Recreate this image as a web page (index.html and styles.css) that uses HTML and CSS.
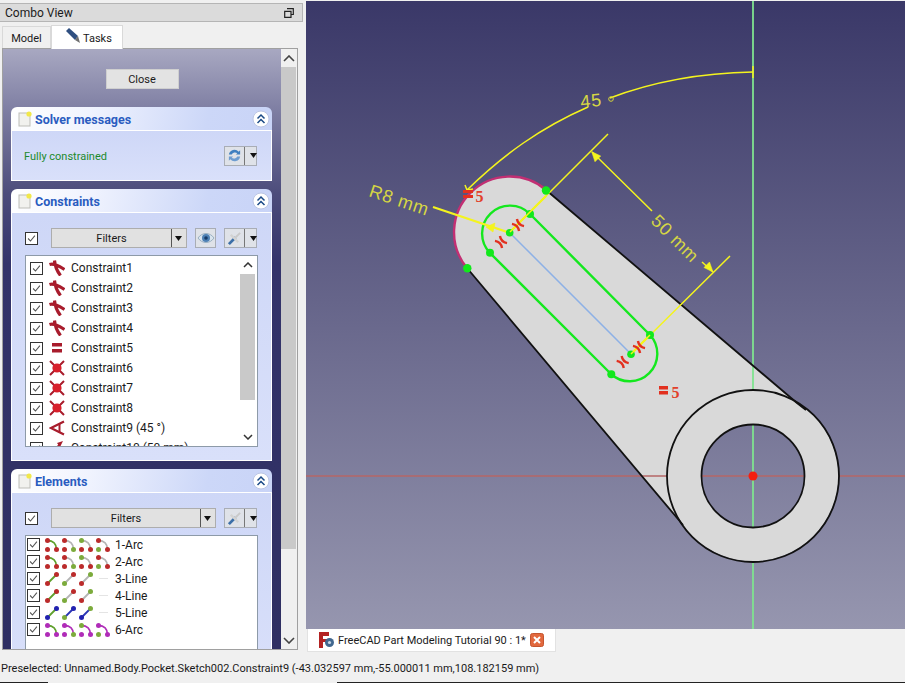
FILE: index.html
```html
<!DOCTYPE html>
<html lang="en">
<head>
<meta charset="utf-8">
<title>FreeCAD Combo View</title>
<link rel="stylesheet" href="styles.css">
</head>
<body>
<svg class="defs" width="0" height="0" aria-hidden="true">
  <symbol id="check" viewBox="0 0 13 13"><path d="M2.500 6.500 5.300 9.500 10.500 3.200" fill="none" stroke="#555" stroke-width="1.300"/></symbol>
  <symbol id="sheet" viewBox="0 0 14 16"><rect x="1" y="2" width="11" height="13" fill="#f1f1ee" stroke="#bdbdb8"/><circle cx="11" cy="3" r="2.600" fill="#f2e84a"/></symbol>
  <symbol id="collapse" viewBox="0 0 18 18"><circle cx="9" cy="9" r="8" fill="#fff" stroke="#bcc6e4"/><path d="M5.500 8.500 9 5l3.500 3.500M5.500 13 9 9.500l3.500 3.500" fill="none" stroke="#1b4a86" stroke-width="1.500"/></symbol>
  <symbol id="arrow" viewBox="0 0 9 5"><path d="M1 0h7L4.500 5z" fill="#111"/></symbol>
  <symbol id="refresh" viewBox="0 0 16 16"><path d="M2 7a6 6 0 0 1 10.500-3L14 2.500V7H9.500l1.500-1.500A4 4 0 0 0 5 7z" fill="#3f7fc0"/><path d="M14 9a6 6 0 0 1-10.500 3L2 13.500V9h4.500L5 10.500A4 4 0 0 0 11 9z" fill="#6d9cd0"/></symbol>
  <symbol id="eye" viewBox="0 0 18 14"><path d="M1 7c4-6 12-6 16 0-4 6-12 6-16 0z" fill="#d9e4ee" stroke="#9ab0c2"/><circle cx="9" cy="7" r="4" fill="#4d80b4"/><circle cx="9" cy="7" r="1.800" fill="#163a68"/></symbol>
  <symbol id="tools" viewBox="0 0 16 16"><path d="M2 14 9 7" stroke="#3c6fa8" stroke-width="3"/><path d="M8 8l6-6" stroke="#c9c9c9" stroke-width="2"/><path d="M4 4l8 8" stroke="#d3d3d3" stroke-width="2.500"/></symbol>
  <symbol id="tangent" viewBox="0 0 16 16"><path d="M0.500 4.500C5 3 10 6 15.500 9.500M5.500 .5C6 6 8 11 11.500 15.500" fill="none" stroke="#a81c2c" stroke-width="3.200"/></symbol>
  <symbol id="equal" viewBox="0 0 16 16"><path d="M3 3h10v3.500H3zM3 9h10v3.500H3z" fill="#a81c2c"/></symbol>
  <symbol id="coincident" viewBox="0 0 16 16"><path d="M1 1l14 14M15 1 1 15" stroke="#a81c2c" stroke-width="2"/><circle cx="8" cy="8" r="4.600" fill="#d8202c"/></symbol>
  <symbol id="angle" viewBox="0 0 16 16"><path d="M15 1.500 2 8l13 6.500" fill="none" stroke="#a81c2c" stroke-width="2.200"/><path d="M10.500 3.500v9" stroke="#a81c2c" stroke-width="2"/></symbol>
  <symbol id="length" viewBox="0 0 16 16"><path d="M14 1 8 3l3 4z" fill="#a81c2c"/><path d="M2 15 11 4" stroke="#a81c2c" stroke-width="2"/></symbol>
  <symbol id="arc-el" viewBox="0 0 14 14"><path class="edge" d="M2.500 2.500C8 2.500 11.500 6 11.500 11.500" fill="none" stroke-width="1.800"/><circle class="pa" cx="2.500" cy="2.500" r="2.500"/><circle class="pb" cx="2.500" cy="11.500" r="2.500"/><circle class="pc" cx="11.500" cy="11.500" r="2.500"/></symbol>
  <symbol id="line-el" viewBox="0 0 14 14"><path class="edge" d="M2.500 11.500 11.500 2.500" fill="none" stroke-width="1.800"/><circle class="pb" cx="2.500" cy="11.500" r="2.500"/><circle class="pa" cx="11.500" cy="2.500" r="2.500"/></symbol>
</svg>

<div class="main">
  <aside class="dock">
    <header class="dock-title">
      <span>Combo View</span>
      <svg class="dock-btn" viewBox="0 0 10 10"><path d="M3 .7h6.300V6.500H7.500M.7 3.300h6.300V9.300H.7zM.7 3.300h6.300" fill="none" stroke="#222" stroke-width="1.200"/></svg>
    </header>
    <nav class="tabs">
      <div class="tab">Model</div>
      <div class="tab active">
        <svg class="tab-icon" viewBox="0 0 16 16"><path d="M1 3 4 0l9 8-3 4z" fill="#2f4f80"/><path d="M10 12l3-4 2 7z" fill="#6f6f6f"/></svg>
        Tasks
      </div>
    </nav>
    <div class="pane">
      <div class="task-scroll">
        <button class="close-btn">Close</button>

        <section class="box">
          <div class="box-head">
            <svg class="box-icon"><use href="#sheet"/></svg>
            <h2>Solver messages</h2>
            <svg class="box-toggle"><use href="#collapse"/></svg>
          </div>
          <div class="box-body solver">
            <span class="ok">Fully constrained</span>
            <div class="tool split"><svg class="tool-icon"><use href="#refresh"/></svg><i></i><svg class="caret"><use href="#arrow"/></svg></div>
          </div>
        </section>

        <section class="box">
          <div class="box-head">
            <svg class="box-icon"><use href="#sheet"/></svg>
            <h2>Constraints</h2>
            <svg class="box-toggle"><use href="#collapse"/></svg>
          </div>
          <div class="box-body">
            <div class="filter-row">
              <span class="cb"><svg><use href="#check"/></svg></span>
              <div class="combo"><span>Filters</span><i></i><svg class="caret"><use href="#arrow"/></svg></div>
              <div class="tool eye-btn"><svg class="eye-icon"><use href="#eye"/></svg></div>
              <div class="tool split"><svg class="tool-icon"><use href="#tools"/></svg><i></i><svg class="caret"><use href="#arrow"/></svg></div>
            </div>
            <div class="list constraints">
              <ul>
                <li><span class="cb"><svg><use href="#check"/></svg></span><svg class="c-icon"><use href="#tangent"/></svg>Constraint1</li>
                <li><span class="cb"><svg><use href="#check"/></svg></span><svg class="c-icon"><use href="#tangent"/></svg>Constraint2</li>
                <li><span class="cb"><svg><use href="#check"/></svg></span><svg class="c-icon"><use href="#tangent"/></svg>Constraint3</li>
                <li><span class="cb"><svg><use href="#check"/></svg></span><svg class="c-icon"><use href="#tangent"/></svg>Constraint4</li>
                <li><span class="cb"><svg><use href="#check"/></svg></span><svg class="c-icon"><use href="#equal"/></svg>Constraint5</li>
                <li><span class="cb"><svg><use href="#check"/></svg></span><svg class="c-icon"><use href="#coincident"/></svg>Constraint6</li>
                <li><span class="cb"><svg><use href="#check"/></svg></span><svg class="c-icon"><use href="#coincident"/></svg>Constraint7</li>
                <li><span class="cb"><svg><use href="#check"/></svg></span><svg class="c-icon"><use href="#coincident"/></svg>Constraint8</li>
                <li><span class="cb"><svg><use href="#check"/></svg></span><svg class="c-icon"><use href="#angle"/></svg>Constraint9 (45 °)</li>
                <li><span class="cb"><svg><use href="#check"/></svg></span><svg class="c-icon"><use href="#length"/></svg>Constraint10 (50 mm)</li>
              </ul>
              <div class="mini-bar">
                <svg class="chev" viewBox="0 0 10 6"><path d="M1 5 5 1l4 4" fill="none" stroke="#333" stroke-width="1.500"/></svg>
                <div class="mini-thumb"></div>
                <svg class="chev" viewBox="0 0 10 6"><path d="M1 1l4 4 4-4" fill="none" stroke="#333" stroke-width="1.500"/></svg>
              </div>
            </div>
          </div>
        </section>

        <section class="box">
          <div class="box-head">
            <svg class="box-icon"><use href="#sheet"/></svg>
            <h2>Elements</h2>
            <svg class="box-toggle"><use href="#collapse"/></svg>
          </div>
          <div class="box-body">
            <div class="filter-row">
              <span class="cb"><svg><use href="#check"/></svg></span>
              <div class="combo wide"><span>Filters</span><i></i><svg class="caret"><use href="#arrow"/></svg></div>
              <div class="tool split"><svg class="tool-icon"><use href="#tools"/></svg><i></i><svg class="caret"><use href="#arrow"/></svg></div>
            </div>
            <ul class="list elements">
              <li><span class="cb"><svg><use href="#check"/></svg></span>
                <svg class="el e-g a-r b-r c-r"><use href="#arc-el"/></svg><svg class="el e-x a-r b-r c-g"><use href="#arc-el"/></svg><svg class="el e-x a-g b-r c-r"><use href="#arc-el"/></svg><svg class="el e-x a-r b-g c-r"><use href="#arc-el"/></svg><span class="el-name">1-Arc</span></li>
              <li><span class="cb"><svg><use href="#check"/></svg></span>
                <svg class="el e-g a-r b-r c-r"><use href="#arc-el"/></svg><svg class="el e-x a-r b-r c-g"><use href="#arc-el"/></svg><svg class="el e-x a-g b-r c-r"><use href="#arc-el"/></svg><svg class="el e-x a-r b-g c-r"><use href="#arc-el"/></svg><span class="el-name">2-Arc</span></li>
              <li><span class="cb"><svg><use href="#check"/></svg></span>
                <svg class="el e-g a-r b-r"><use href="#line-el"/></svg><svg class="el e-x a-r b-g"><use href="#line-el"/></svg><svg class="el e-x a-g b-r"><use href="#line-el"/></svg><b class="el-dash"></b><span class="el-name">3-Line</span></li>
              <li><span class="cb"><svg><use href="#check"/></svg></span>
                <svg class="el e-g a-r b-r"><use href="#line-el"/></svg><svg class="el e-x a-r b-g"><use href="#line-el"/></svg><svg class="el e-x a-g b-r"><use href="#line-el"/></svg><b class="el-dash"></b><span class="el-name">4-Line</span></li>
              <li><span class="cb"><svg><use href="#check"/></svg></span>
                <svg class="el e-g a-b b-b"><use href="#line-el"/></svg><svg class="el e-b a-b b-g"><use href="#line-el"/></svg><svg class="el e-b a-g b-b"><use href="#line-el"/></svg><b class="el-dash"></b><span class="el-name">5-Line</span></li>
              <li><span class="cb"><svg><use href="#check"/></svg></span>
                <svg class="el e-g a-m b-m c-m"><use href="#arc-el"/></svg><svg class="el e-m a-m b-m c-g"><use href="#arc-el"/></svg><svg class="el e-m a-g b-m c-m"><use href="#arc-el"/></svg><svg class="el e-m a-m b-g c-m"><use href="#arc-el"/></svg><span class="el-name">6-Arc</span></li>
            </ul>
          </div>
        </section>
      </div>
      <div class="pane-bar">
        <svg class="pane-chev" viewBox="0 0 12 7"><path d="M1 6l5-5 5 5" fill="none" stroke="#444" stroke-width="1.600"/></svg>
        <div class="pane-thumb"></div>
        <svg class="pane-chev" viewBox="0 0 12 7"><path d="M1 1l5 5 5-5" fill="none" stroke="#444" stroke-width="1.600"/></svg>
      </div>
    </div>
  </aside>

  <div class="view">
    <svg class="canvas" viewBox="306 1 599 628" width="599" height="628">
      <defs>
        <linearGradient id="sky" x1="0" y1="0" x2="0" y2="1">
          <stop offset="0" stop-color="#3a3868"/>
          <stop offset="1" stop-color="#9696af"/>
        </linearGradient>
      </defs>
      <rect x="306" y="1" width="599" height="628" fill="url(#sky)"/>
      <path class="solid" fill-rule="evenodd" d="M546 190 797 403 808.100 410.600A85.500 85.500 0 1 1 683.900 526.400L467 268A55.700 55.700 0 0 1 546 190ZM804.500 476a51.500 51.500 0 1 0-103 0a51.500 51.500 0 1 0 103 0Z"/>
      <path class="axis-g" d="M753 1V390M753 424.500V527.500M753 562V629"/>
      <path class="axis-r" d="M306 476H667M702 476H804M839 476H905"/>
      <circle class="wire" cx="753" cy="476" r="86"/>
      <circle class="wire" cx="753" cy="476" r="51.500"/>
      <path class="wire" d="M546 190 797 403 806 410M467 268 683 525"/>
      <path class="rim" d="M546 190A55.700 55.700 0 0 0 467 268"/>
      <path class="ref" d="M509.700 232.700 631 354"/>
      <path class="slot" d="M530 214 650 335A27.600 27.600 0 0 1 611 374L490 253A27.600 27.600 0 0 1 530 214Z"/>
      <g class="dim">
        <path d="M753 72C698 73 652 82 610 98M588 107C540 128 503 155 467 190"/>
        <path d="M753 66V78M465 185 467 190 473 189"/>
        <path d="M608 134 510 232M730 256 631 354"/>
        <path d="M592 152 652 211M702 262 713 272"/>
        <path class="thick" d="M433 207 510 233M510 232 546 196M631 354 650 335"/>
        <path class="head" d="M486 227 495 223 493 232ZM591.700 151.700 600.700 156 595 161.700ZM713 272 704 267.500 709.500 262Z"/>
        <circle class="deg" cx="611" cy="99" r="2.300"/>
      </g>
      <text class="dim-text" transform="translate(581 108) rotate(-6)">45</text>
      <text class="dim-text" transform="translate(368 196) rotate(18.700)">R8 mm</text>
      <text class="dim-text" transform="translate(650 222) rotate(45)">50 mm</text>
      <g class="pts">
        <circle cx="546" cy="190.500" r="4.200"/><circle cx="467.300" cy="268.300" r="4.200"/>
        <circle cx="530" cy="214" r="4"/><circle cx="490" cy="252.700" r="4"/>
        <circle cx="650" cy="335" r="4"/><circle cx="611.300" cy="374.300" r="4"/>
        <circle cx="509.700" cy="232.700" r="3.800"/><circle cx="631" cy="354.300" r="3.800"/>
      </g>
      <path class="dim thin" d="M510 232 546 196M631 354 650 335"/>
      <g class="tan">
        <path d="M-5-3.500Q0 0 5-3.500M-5 3.500Q0 0 5 3.500" transform="translate(518 225) rotate(45)"/>
        <path d="M-5-3.500Q0 0 5-3.500M-5 3.500Q0 0 5 3.500" transform="translate(501 242) rotate(45)"/>
        <path d="M-5-3.500Q0 0 5-3.500M-5 3.500Q0 0 5 3.500" transform="translate(639 347) rotate(45)"/>
        <path d="M-5-3.500Q0 0 5-3.500M-5 3.500Q0 0 5 3.500" transform="translate(622.700 362) rotate(45)"/>
      </g>
      <path class="eq" d="M463 190h10v3h-10zM463 195h10v3h-10zM659 386h9v3.500h-9zM659 391h9v3.500h-9z"/>
      <text class="five" x="475.500" y="201.500">5</text>
      <text class="five" x="671.500" y="397.500">5</text>
      <circle class="origin" cx="753" cy="476" r="4.500"/>
    </svg>
    <div class="doc-tabs">
      <div class="doc-tab">
        <svg class="doc-icon" viewBox="0 0 16 16"><path d="M0 0h10v4H4v3h5v3H4v6H0z" fill="#b32222"/><circle cx="10.500" cy="10.500" r="4.500" fill="#40678f"/><circle cx="10.500" cy="10.500" r="1.600" fill="#c8d6e4"/></svg>
        <span>FreeCAD Part Modeling Tutorial 90 : 1*</span>
        <svg class="doc-close" viewBox="0 0 14 14"><rect x=".5" y=".5" width="13" height="13" rx="2" fill="#e2683d" stroke="#c4552f"/><path d="M4 4l6 6M10 4l-6 6" stroke="#fff" stroke-width="2"/></svg>
      </div>
    </div>
  </div>
</div>
<footer class="status">Preselected: Unnamed.Body.Pocket.Sketch002.Constraint9 (-43.032597 mm,-55.000011 mm,108.182159 mm)</footer>
</body>
</html>
```

FILE: styles.css
```css
* { box-sizing: border-box; }
html, body { margin: 0; padding: 0; }
body {
  width: 905px;
  height: 683px;
  overflow: hidden;
  background: #f0f0f0;
  font-family: Roboto, "Noto Sans", sans-serif;
  font-size: 12px;
  color: #1a1a1a;
}
.defs { position: absolute; }
.main { display: flex; height: 650px; }

/* Dock */
.dock { width: 306px; padding-top: 3px; flex: none; display: flex; flex-direction: column; }
.dock-title {
  height: 19px;
  margin: 0 3px 0 0;
  padding: 1px 5px 0;
  display: flex; align-items: center; justify-content: space-between;
  background: #dbdbdb;
  border: 1px solid #b5b5b5;
  border-left: 0;
  font-size: 12px;
}
.dock-btn { width: 10px; height: 10px; margin-right: 3px; }
.tabs { display: flex; height: 26px; padding: 2px 0 0 2px; align-items: flex-end; font-size: 11px; }
.tab {
  height: 22px; width: 49px;
  border: 1px solid #d9d9d9; border-bottom: 0;
  background: #f0f0f0;
  text-align: center; line-height: 23px;
}
.tab.active {
  height: 24px; width: 72px;
  background: #fff;
  display: flex; align-items: center; padding: 1px 0 0 13px; gap: 2px;
  margin-bottom: -1px; position: relative; z-index: 1;
}
.tab-icon { width: 16px; height: 16px; margin-top: -4px; }
.pane {
  width: 296px; height: 602px; margin-left: 2px;
  display: flex;
  border: 1px solid #a0a0a0;
  background: #f0f0f0;
}
.task-scroll {
  width: 278px; height: 600px; overflow: hidden;
  padding: 20px 8px 0;
  background: linear-gradient(#a8a8c1 0, #7f7fa3 60px, #4c4c7b 145px, #33336a 215px, #2f2f62 100%);
  flex: none;
}
.close-btn {
  display: block;
  width: 73px; height: 20px; margin: 0 auto 18px; padding: 0;
  background: #e3e3e3; border: 1px solid #cfcfcf;
  font: inherit; font-size: 11px; color: #1a1a1a;
}
.box { margin-bottom: 8px; width: 261px; }
.box-head {
  height: 24px; display: flex; align-items: center;
  padding: 0 3px 0 7px;
  background: linear-gradient(100deg, #fff 0, #f0f3fe 30%, #ccd7f8 75%, #c9d4f7 100%);
  border-radius: 6px 6px 0 0;
  border-bottom: 1px solid #fff;
}
.box-head h2 {
  margin: 1px 0 0 3px; flex: 1;
  font-size: 12.500px; font-weight: 700; color: #2a5cc0;
}
.box-icon { width: 14px; height: 16px; }
.box-toggle { width: 18px; height: 18px; margin-right: -1px; }
.box-body {
  padding: 15px 14px 13px 13px;
  background: linear-gradient(#ced7f7, #d9e0fa);
  border: solid #fff; border-width: 0 1px 1px;
}
.solver {
  height: 50px; padding: 0 14px 0 12px;
  display: flex; align-items: center; justify-content: space-between;
}
.ok { color: #1c8a2c; margin-top: 2px; font-size: 11px; }
.tool {
  height: 20px; display: flex; align-items: center;
  background: #dfe2e8; border: 1px solid #a9adb5;
}
.split { width: 33px; padding-left: 2px; }
.split i { width: 1px; height: 18px; background: #777; margin: 0 4px 0 2px; flex: none; }
.tool-icon { width: 15px; height: 15px; flex: none; }
.eye-btn { width: 21px; justify-content: center; margin-right: 8px; }
.eye-icon { width: 18px; height: 14px; }
.caret { width: 9px; height: 5px; flex: none; }
.cb {
  width: 13px; height: 13px; flex: none; display: block;
  border: 1px solid #333; background: #fff;
}
.cb svg { display: block; width: 11px; height: 11px; }
.filter-row { display: flex; align-items: center; height: 20px; margin-bottom: 7px; }
.filter-row .cb { margin: 0 13px 0 0; }
.combo {
  width: 136px; height: 20px; margin-right: 8px;
  display: flex; align-items: center;
  background: #e1e1e1; border: 1px solid #adadad;
  padding-right: 3px; font-size: 11px;
}
.combo span { flex: 1; text-align: center; }
.combo i { width: 1px; height: 18px; background: #555; margin-right: 2px; }
.combo.wide { width: 165px; }
.list {
  width: 233px; background: #fff;
  border: 1px solid #8d9aa8;
  margin: 0; padding: 0; list-style: none; overflow: hidden;
}
.constraints { height: 192px; display: flex; }
.constraints ul { margin: 0; padding: 2px 0 0 4px; list-style: none; flex: 1; overflow: hidden; }
.constraints li { height: 20px; display: flex; align-items: center; white-space: nowrap; }
.c-icon { width: 16px; height: 16px; margin: 0 6px; flex: none; }
.mini-bar { width: 15px; margin-right: 2px; flex: none; display: flex; flex-direction: column; align-items: center; }
.chev { width: 10px; height: 6px; margin: 6px 0; flex: none; }
.mini-thumb { width: 15px; height: 126px; background: #c9c9c9; margin-top: 0; flex: none; }
.mini-bar .chev:last-child { margin-top: auto; }
.elements { height: 130px; padding: 0 0 0 1px; }
.elements li { height: 17px; display: flex; align-items: center; white-space: nowrap; }
.el { width: 14px; height: 14px; margin-right: 3px; flex: none; }
.el:first-of-type { margin-left: 5px; }
.elements .cb { margin-right: 0; }
.el-dash { width: 9px; height: 1px; background: #e4e4e4; margin: 0 5px 0 3px; flex: none; }
.el-name { margin-left: 2px; }
.edge { stroke: var(--e); }
.pa { fill: var(--a); } .pb { fill: var(--b); } .pc { fill: var(--c); }
.e-g { --e: #5fa02c; } .e-x { --e: #b4b4b4; } .e-b { --e: #2b35b5; } .e-m { --e: #b030b8; }
.a-r { --a: #bb2b2b; } .a-g { --a: #7cab3c; } .a-b { --a: #2222b0; } .a-m { --a: #b02cb8; }
.b-r { --b: #bb2b2b; } .b-g { --b: #7cab3c; } .b-b { --b: #2222b0; } .b-m { --b: #b02cb8; }
.c-r { --c: #bb2b2b; } .c-g { --c: #7cab3c; } .c-m { --c: #b02cb8; }

.pane-bar { width: 15px; display: flex; flex-direction: column; align-items: center; }
.pane-chev { width: 12px; height: 7px; margin: 6px 0 5px; flex: none; }
.pane-thumb { width: 15px; height: 482px; background: #c9c9c9; flex: none; }
.pane-bar .pane-chev:last-child { margin-top: auto; }

/* 3D view */
.view { flex: 1; padding-top: 1px; display: flex; flex-direction: column; }
.canvas { display: block; flex: none; }
.doc-tabs { height: 23px; padding-left: 1px; position: relative; z-index: 1; font-size: 11px; }
.doc-tab {
  width: 249px; height: 23px;
  background: #fff; border: 1px solid #e2e2e2; border-top: 0;
  display: flex; align-items: center; padding-left: 11px;
}
.doc-icon { width: 16px; height: 16px; flex: none; }
.doc-tab span { margin-left: 3px; white-space: nowrap; }
.doc-close { width: 14px; height: 14px; margin-left: 4px; flex: none; }

.solid { fill: #d9d9d9; }
.wire { fill: none; stroke: #111; stroke-width: 1.800; }
.rim { fill: none; stroke: #c22f73; stroke-width: 2.400; }
.axis-g { fill: none; stroke: #7fe38f; stroke-width: 1.800; }
.axis-r { fill: none; stroke: #b56767; stroke-width: 1.500; }
.ref { stroke: #8db1e6; stroke-width: 1.500; }
.slot { fill: none; stroke: #14e81e; stroke-width: 2.400; }
.pts { fill: #12e81c; }
.dim, .dim path { fill: none; stroke: #f4f41e; stroke-width: 1.500; }
.dim path.thick { stroke-width: 2.200; }
.dim path.head { fill: #f4f41e; stroke: #f4f41e; stroke-width: .6; }
.dim .deg { stroke: #d3d33c; stroke-width: 1; }
.dim-text { font-family: "Liberation Sans", sans-serif; font-size: 18px; letter-spacing: .8px; fill: #d6d644; }
.tan path { fill: none; stroke: #e2301f; stroke-width: 2.400; }
.eq { fill: #e2301f; }
.five { font-family: "Liberation Serif", serif; font-weight: 700; font-size: 16px; fill: #e2402a; }
.origin { fill: #f41e10; }

.status {
  height: 33px; padding: 12px 0 0 1px;
  white-space: nowrap; font-size: 11px;
  background: linear-gradient(to right, #222 48px, transparent 48px, transparent 337px, #222 337px) no-repeat bottom / 100% 1px;
}
```
